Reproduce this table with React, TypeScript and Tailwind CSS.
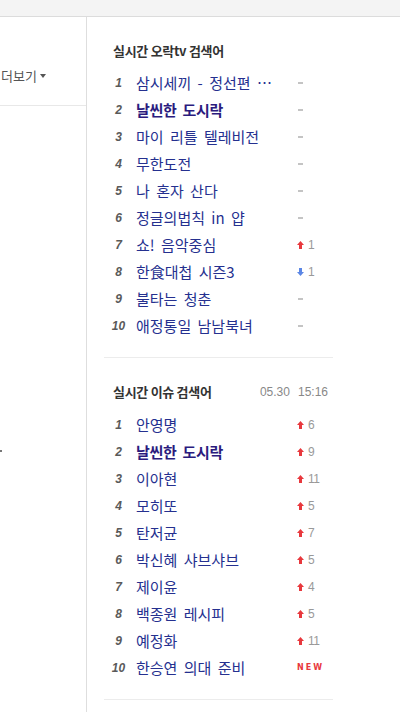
import React from "react";

type Change =
  | { kind: "none" }
  | { kind: "up"; n: number }
  | { kind: "down"; n: number }
  | { kind: "new" };

type Item = { text: string; bold?: boolean; change: Change };

const tvItems: Item[] = [
  { text: "삼시세끼 - 정선편 …", change: { kind: "none" } },
  { text: "날씬한 도시락", bold: true, change: { kind: "none" } },
  { text: "마이 리틀 텔레비전", change: { kind: "none" } },
  { text: "무한도전", change: { kind: "none" } },
  { text: "나 혼자 산다", change: { kind: "none" } },
  { text: "정글의법칙 in 얍", change: { kind: "none" } },
  { text: "쇼! 음악중심", change: { kind: "up", n: 1 } },
  { text: "한食대첩 시즌3", change: { kind: "down", n: 1 } },
  { text: "불타는 청춘", change: { kind: "none" } },
  { text: "애정통일 남남북녀", change: { kind: "none" } },
];

const issueItems: Item[] = [
  { text: "안영명", change: { kind: "up", n: 6 } },
  { text: "날씬한 도시락", bold: true, change: { kind: "up", n: 9 } },
  { text: "이아현", change: { kind: "up", n: 11 } },
  { text: "모히또", change: { kind: "up", n: 5 } },
  { text: "탄저균", change: { kind: "up", n: 7 } },
  { text: "박신혜 샤브샤브", change: { kind: "up", n: 5 } },
  { text: "제이윤", change: { kind: "up", n: 4 } },
  { text: "백종원 레시피", change: { kind: "up", n: 5 } },
  { text: "예정화", change: { kind: "up", n: 11 } },
  { text: "한승연 의대 준비", change: { kind: "new" } },
];

function ArrowUp() {
  return (
    <svg width="7" height="8" viewBox="0 0 7 8" className="block">
      <polygon points="3.5,0 7,4 5,4 5,8 2,8 2,4 0,4" fill="#e8383d" />
    </svg>
  );
}

function ArrowDown() {
  return (
    <svg width="7" height="8" viewBox="0 0 7 8" className="block">
      <polygon points="3.5,8 7,4 5,4 5,0 2,0 2,4 0,4" fill="#5b86e5" />
    </svg>
  );
}

function ChangeCell({ c }: { c: Change }) {
  if (c.kind === "none") {
    return (
      <div className="flex items-center pl-[1px]">
        <span className="block w-[5px] h-[2px] bg-[#c4c4c4]" />
      </div>
    );
  }
  if (c.kind === "new") {
    return (
      <span className="text-[8px] leading-none font-bold tracking-[2px] text-[#e8383d] [font-family:'DejaVu_Sans',sans-serif]">
        NEW
      </span>
    );
  }
  return (
    <div className="flex items-center gap-[4px]">
      {c.kind === "up" ? <ArrowUp /> : <ArrowDown />}
      <span className="text-[12px] leading-none text-[#999] tracking-[-0.5px] [font-family:'Liberation_Sans',sans-serif]">
        {c.n}
      </span>
    </div>
  );
}

function Row({ rank, item }: { rank: number; item: Item }) {
  return (
    <div className="flex items-center h-[27px] pl-[4px]">
      <span className="w-[21px] text-center text-[12px] font-bold italic text-[#5a5a5a] [font-family:'Liberation_Sans',sans-serif]">
        {rank}
      </span>
      <span
        className={
          "ml-[7px] w-[161px] whitespace-nowrap overflow-hidden text-[15px] leading-[20px] [word-spacing:3px] " +
          (item.bold ? "font-bold text-[#2b1b7e] tracking-[-0.3px]" : "text-[#25308f]")
        }
      >
        {item.text}
      </span>
      <ChangeCell c={item.change} />
    </div>
  );
}

function Section({
  title,
  items,
  date,
  gap,
}: {
  title: string;
  items: Item[];
  date?: boolean;
  gap: string;
}) {
  return (
    <div className="w-[229px] pt-[25px] pb-[18px] border-b border-[#ececec]">
      <div className={"flex items-center justify-between h-[18px] pl-[9px] pr-[5px] " + gap}>
        <span className="text-[13px] font-bold text-[#333] tracking-[-0.3px] leading-[18px]">
          {title}
        </span>
        {date && (
          <span className="flex gap-[8px] text-[12px] text-[#888] [font-family:'Liberation_Sans',sans-serif]">
            <span>05.30</span>
            <span>15:16</span>
          </span>
        )}
      </div>
      <div className="flex flex-col">
        {items.map((it, i) => (
          <Row key={i} rank={i + 1} item={it} />
        ))}
      </div>
    </div>
  );
}

export default function App() {
  return (
    <div className="w-[400px] h-[712px] bg-white overflow-hidden flex flex-col [font-family:'Noto_Sans_CJK_KR','Noto_Sans',sans-serif]">
      <div className="h-[17px] shrink-0 bg-[#f4f4f4] border-b border-[#dcdcdc]" />
      <div className="flex flex-1">
        <div className="w-[87px] shrink-0 border-r border-[#dedede] flex flex-col">
          <div className="pt-[50px] pb-[21px] border-b border-[#e8e8e8] pl-[1px] flex items-center gap-[3px] h-[89px] box-border">
            <span className="text-[13px] leading-[18px] text-[#555]">더보기</span>
            <svg width="6" height="4" viewBox="0 0 6 4" className="block mt-[1px]">
              <polygon points="0,0 6,0 3,4" fill="#555" />
            </svg>
          </div>
          <div className="mt-[344px] w-[2px] h-[2px] bg-[#777]" />
        </div>
        <div className="flex-1 pl-[17px]">
          <Section title="실시간 오락tv 검색어" items={tvItems} gap="mb-[9px]" />
          <Section title="실시간 이슈 검색어" items={issueItems} date gap="mb-[10px]" />
        </div>
      </div>
    </div>
  );
}
